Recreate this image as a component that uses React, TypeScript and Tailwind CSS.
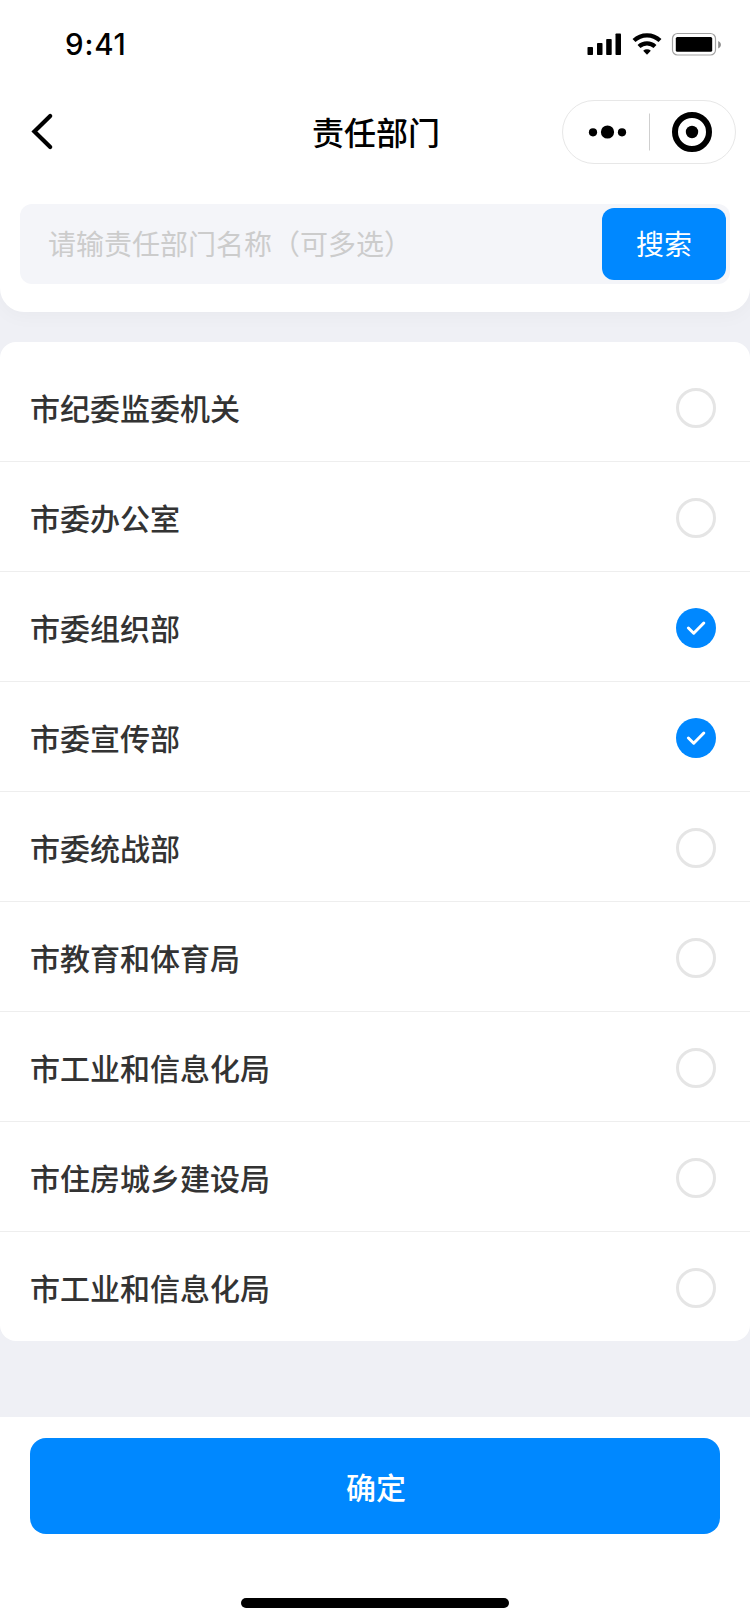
import clsx from "clsx";

// Department type definition
interface Department {
  id: number;
  name: string;
  checked: boolean;
}

const DEPARTMENTS: Department[] = [
  { id: 1, name: "市纪委监委机关", checked: false },
  { id: 2, name: "市委办公室", checked: false },
  { id: 3, name: "市委组织部", checked: true },
  { id: 4, name: "市委宣传部", checked: true },
  { id: 5, name: "市委统战部", checked: false },
  { id: 6, name: "市教育和体育局", checked: false },
  { id: 7, name: "市工业和信息化局", checked: false },
  { id: 8, name: "市住房城乡建设局", checked: false },
  { id: 9, name: "市工业和信息化局", checked: false },
];

function StatusBar() {
  return (
    <div className="flex h-[88px] items-center justify-between pl-[65px] pr-7">
      <span className="pt-0.5 font-['Inter'] text-[29.5px] font-medium leading-none tracking-[0.8px]">
        9:41
      </span>
      {/* Signal, wifi and battery */}
      <svg width="136" height="24" viewBox="0 0 136 24" fill="none">
        <g fill="#000">
          <rect x="1.5" y="15" width="5.5" height="8" rx="0.8" />
          <rect x="11" y="11" width="5.5" height="12" rx="0.8" />
          <rect x="20.2" y="7" width="5.5" height="16" rx="0.8" />
          <rect x="29.5" y="1.5" width="5.5" height="21.5" rx="0.8" />
        </g>
        <path d="M48 8.6a18.6 18.6 0 0 1 26 0" stroke="#000" strokeWidth="4.2" />
        <path d="M53 14.5a11.6 11.6 0 0 1 16 0" stroke="#000" strokeWidth="4.2" />
        <path d="M57.2 18.8a5.6 5.6 0 0 1 7.6 0L61 22.8z" fill="#000" />
        <rect x="86.5" y="1.5" width="43" height="21.5" rx="5" stroke="#a3a3a3" strokeWidth="1.2" />
        <rect x="89.8" y="5" width="36.4" height="14.8" rx="1.6" fill="#000" />
        <path d="M132.2 9v7.4c1.6-.7 2.7-2 2.7-3.7s-1.1-3-2.7-3.7z" fill="#8c8c8c" />
      </svg>
    </div>
  );
}

function NavBar() {
  return (
    <div className="grid h-[88px] grid-cols-[1fr_auto_1fr] items-center px-3.5">
      <svg className="ml-3.5" width="28" height="40" viewBox="0 0 28 40" fill="none">
        <path d="M22.2 4 6.4 19.6 22.2 35" stroke="#000" strokeWidth="4.2" strokeLinecap="round" />
      </svg>
      <h1 className="pb-0.5 pl-0.5 text-[32px] font-medium leading-[44px] text-black">
        责任部门
      </h1>
      {/* Mini program capsule */}
      <div className="flex h-16 w-[174px] items-center justify-self-end rounded-full border border-[#e7e7e7]">
        <svg width="172" height="62" viewBox="0 0 172 62" fill="none">
          <circle cx="30" cy="31.3" r="4.1" fill="#000" />
          <circle cx="44.5" cy="31" r="6.6" fill="#000" />
          <circle cx="59" cy="31.3" r="4.1" fill="#000" />
          <path d="M86.5 12.5v37" stroke="#cfcfcf" />
          <circle cx="129" cy="31" r="17" stroke="#000" strokeWidth="6" />
          <circle cx="129" cy="31" r="6.2" fill="#000" />
        </svg>
      </div>
    </div>
  );
}

function CheckCircle({ checked }: { checked: boolean }) {
  return (
    <span
      className={clsx(
        "flex size-10 items-center justify-center rounded-full",
        checked ? "bg-[#0088ff]" : "border-3 border-[#e5e5e5]"
      )}
    >
      {checked && (
        <svg width="40" height="40" viewBox="0 0 40 40" fill="none">
          <path
            d="m12.4 20 5.3 5.2L27.8 15"
            stroke="#fff"
            strokeWidth="3"
            strokeLinecap="round"
            strokeLinejoin="round"
          />
        </svg>
      )}
    </span>
  );
}

export default function App() {
  return (
    <div className="flex h-[1624px] w-[750px] flex-col overflow-hidden bg-[#eff0f5] font-['Noto_Sans_CJK_SC',sans-serif] text-black">
      {/* Header */}
      <header className="h-[312px] rounded-b-3xl bg-white shadow-[0_4px_20px_rgba(0,0,0,0.03)]">
        <StatusBar />
        <NavBar />
        <div className="mx-5 mt-7 flex h-20 items-center justify-between rounded-xl bg-[#f4f5f9] pl-7 pr-1">
          <span className="pb-0.5 text-[28px] text-[#cccccc]">
            请输责任部门名称（可多选）
          </span>
          <button className="h-[72px] w-[124px] rounded-xl bg-[#0088ff] pb-0.5 text-[28px] text-white">
            搜索
          </button>
        </div>
      </header>

      {/* Department list */}
      <ul className="mt-[30px] rounded-2xl bg-white pt-2.5">
        {DEPARTMENTS.map((dept) => (
          <li
            key={dept.id}
            className="flex h-[110px] items-center justify-between border-b border-[#eeeeee] pl-[30px] pr-[34px] pt-[3px] last:h-[109px] last:border-b-0"
          >
            <span className="pb-0.5 text-[30px] font-medium leading-[42px] text-[#333333]">
              {dept.name}
            </span>
            <CheckCircle checked={dept.checked} />
          </li>
        ))}
      </ul>

      {/* Footer */}
      <footer className="mt-auto flex h-[207px] flex-col items-center bg-white px-[30px] pt-[21px]">
        <button className="h-24 w-full rounded-2xl bg-[#0088ff] pl-0.5 text-[30px] font-medium text-white">
          确定
        </button>
        <div className="mt-16 h-2.5 w-[268px] rounded-full bg-black" />
      </footer>
    </div>
  );
}
